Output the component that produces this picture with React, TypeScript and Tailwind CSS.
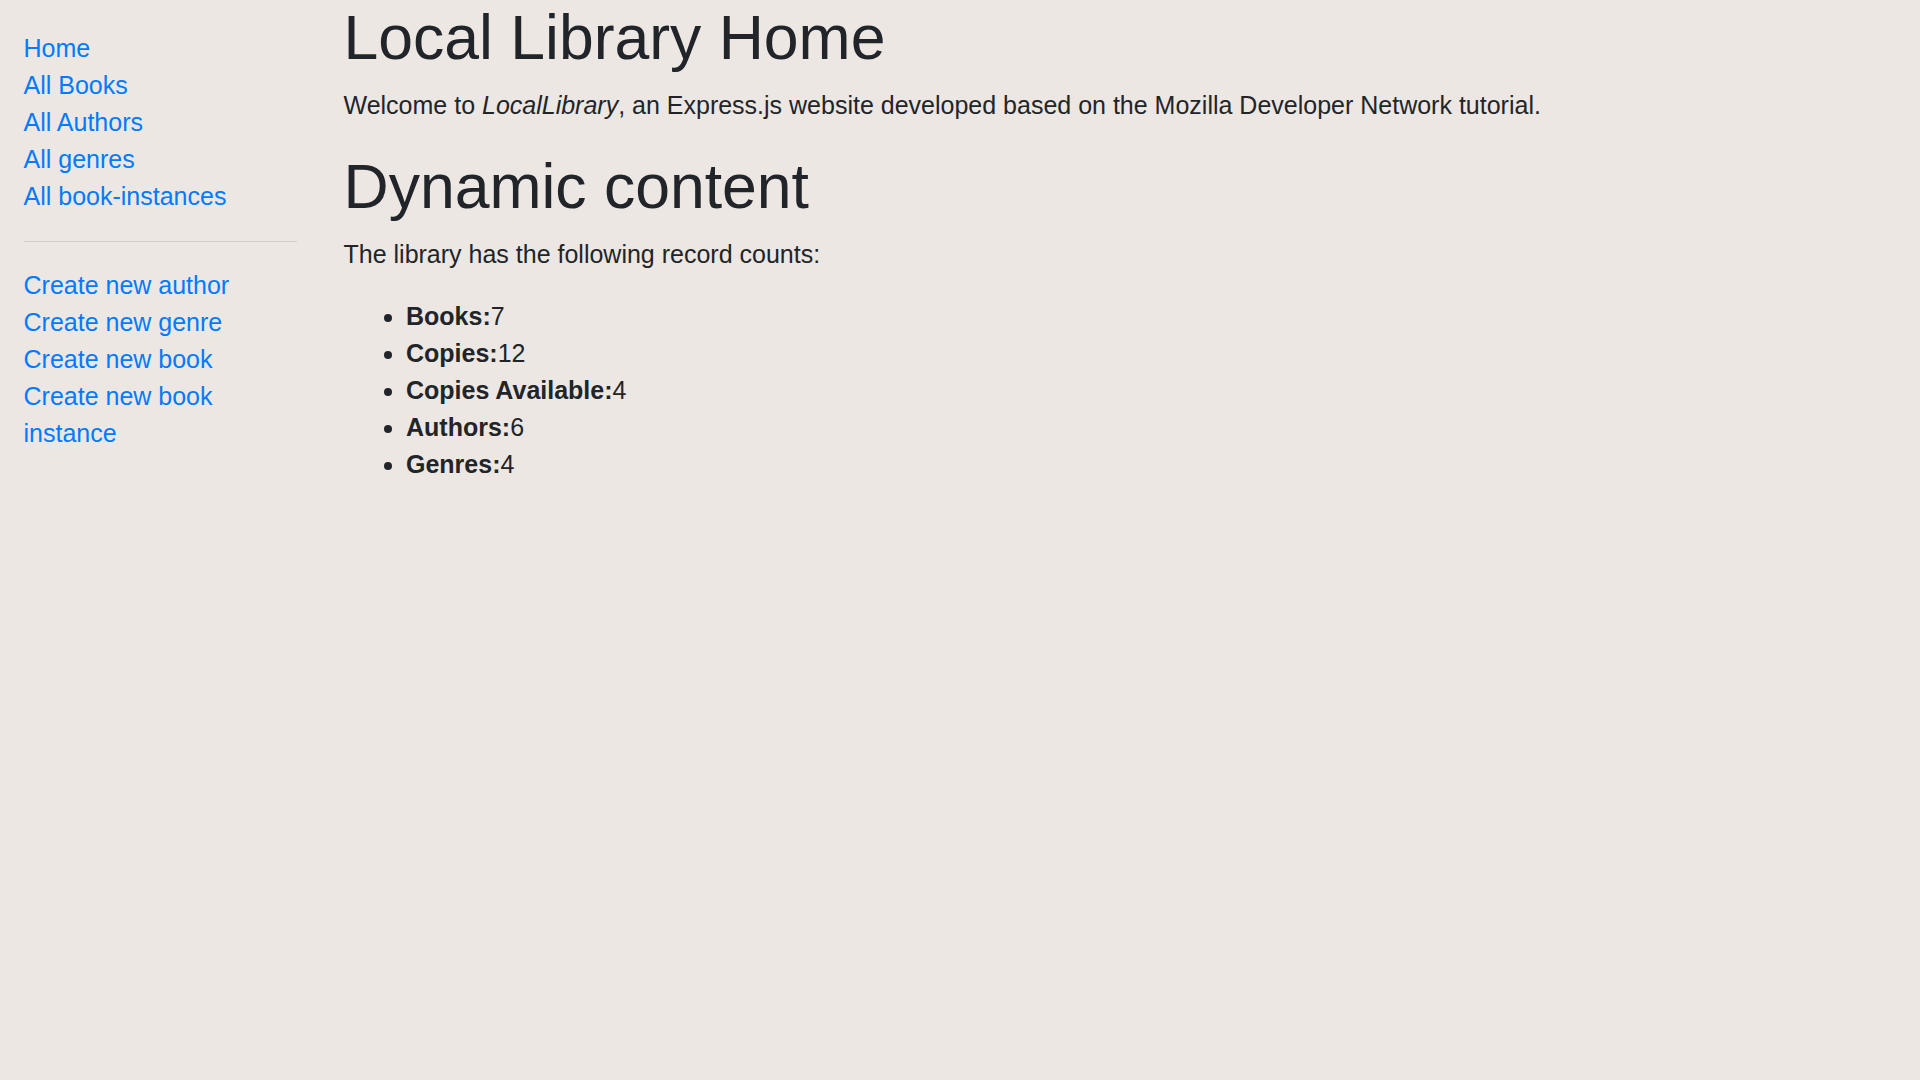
import React from "react";

const browseLinks = ["Home", "All Books", "All Authors", "All genres", "All book-instances"];
const createLinks = ["Create new author", "Create new genre", "Create new book", "Create new book instance"];

const counts = [
  { label: "Books:", value: 7 },
  { label: "Copies:", value: 12 },
  { label: "Copies Available:", value: 4 },
  { label: "Authors:", value: 6 },
  { label: "Genres:", value: 4 },
];

const App = () => {
  return (
    <div className="min-h-screen bg-[#ece7e3] text-[#212529] font-['Liberation_Sans',Arial,sans-serif] text-[25px] leading-[37px]">
      <div className="flex">
        {/* --- SIDEBAR --- */}
        <div className="w-[320px] shrink-0 px-[23.5px]">
          <ul className="mt-[30px]">
            {browseLinks.map((l) => (
              <li key={l}>
                <a href="#" className="text-[#007bff]">{l}</a>
              </li>
            ))}
          </ul>
          <hr className="my-[25.5px] border-t border-[rgba(0,0,0,0.1)]" />
          <ul>
            {createLinks.map((l) => (
              <li key={l}>
                <a href="#" className="text-[#007bff]">{l}</a>
              </li>
            ))}
          </ul>
        </div>

        {/* --- MAIN --- */}
        <div className="flex-1 px-[23.5px]">
          <h1 className="text-[62.5px] leading-[75px] font-normal mb-[11.5px]">Local Library Home</h1>
          <p className="mb-[25px]">
            Welcome to <em>LocalLibrary</em>, an Express.js website developed based on the Mozilla Developer Network tutorial.
          </p>
          <h1 className="text-[62.5px] leading-[75px] font-normal mb-[12.5px]">Dynamic content</h1>
          <p className="mb-[25px]">The library has the following record counts:</p>
          <ul className="list-disc pl-[62.5px] mb-[25px]">
            {counts.map((c) => (
              <li key={c.label}>
                <strong className="font-bold">{c.label}</strong>
                {c.value}
              </li>
            ))}
          </ul>
        </div>
      </div>
    </div>
  );
};

export default App;
